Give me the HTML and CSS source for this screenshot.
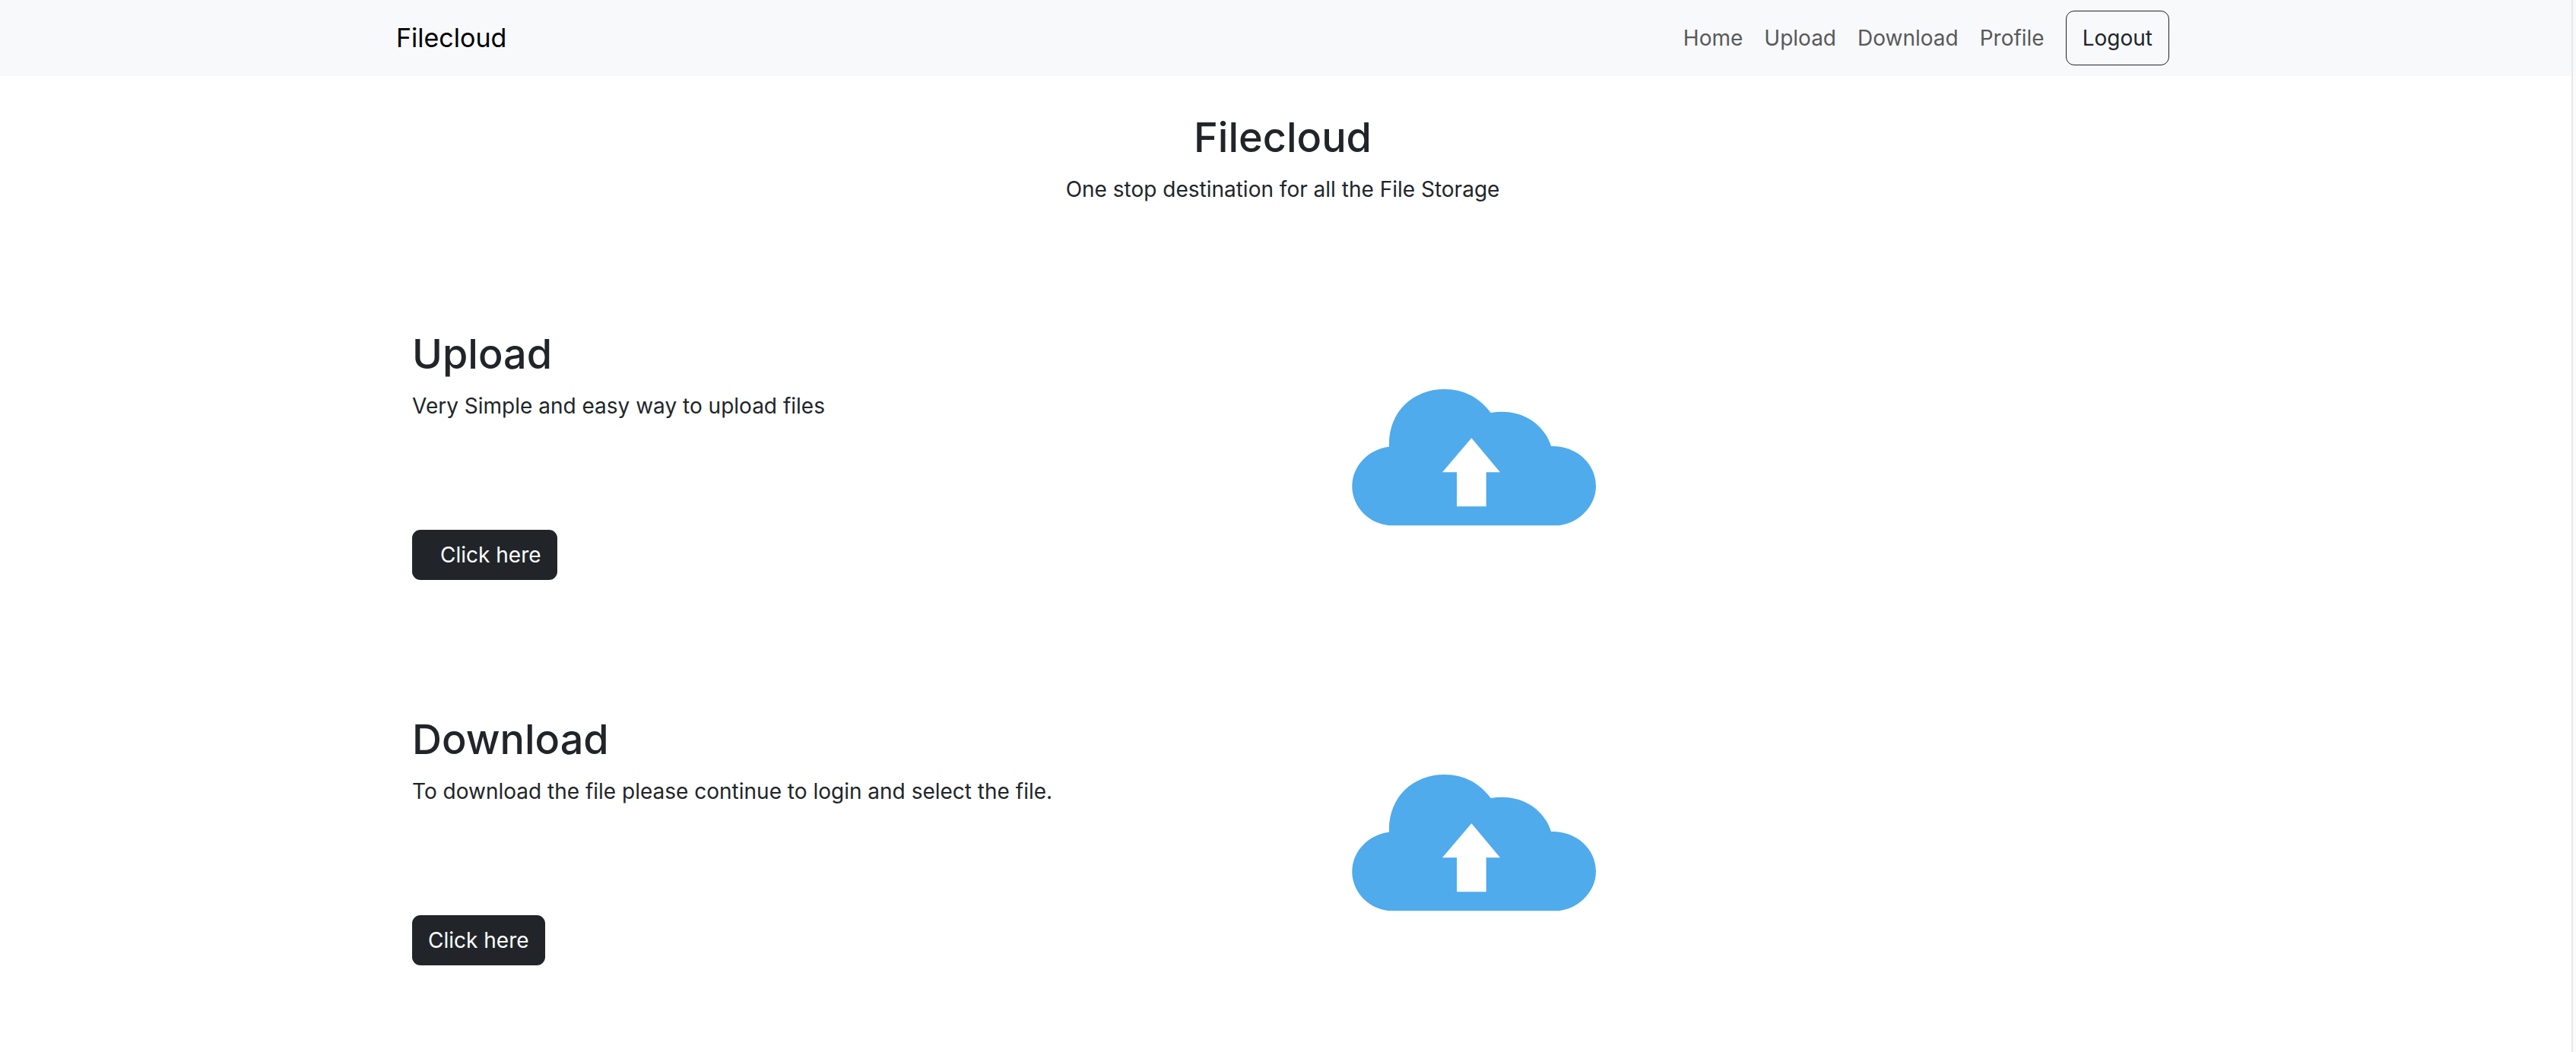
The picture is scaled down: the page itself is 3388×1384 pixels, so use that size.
FILE: index.html
```html
<!DOCTYPE html>
<html lang="en">
<head>
  <meta charset="utf-8">
  <meta name="viewport" content="width=device-width, initial-scale=1">
  <title>Filecloud</title>
  <link rel="stylesheet" href="styles.css">
</head>
<body>
  <div class="page">
    <header class="navbar">
      <div class="container navbar-inner">
        <a class="brand" href="#">Filecloud</a>
        <nav class="nav">
          <a class="nav-link" href="#">Home</a>
          <a class="nav-link" href="#upload">Upload</a>
          <a class="nav-link" href="#download">Download</a>
          <a class="nav-link" href="#">Profile</a>
          <button class="logout" type="button">Logout</button>
        </nav>
      </div>
    </header>
    <main class="main">
      <div class="container">
        <div class="intro">
          <h1 class="title">Filecloud</h1>
          <p class="text">One stop destination for all the File Storage</p>
        </div>
        <section class="feature" id="upload">
          <div class="feature-body">
            <h2 class="title">Upload</h2>
            <p class="text">Very Simple and easy way to upload files</p>
            <button class="btn btn-indent" type="button">Click here</button>
          </div>
          <svg class="cloud" viewBox="-159 -143 1260 996" role="img" aria-label="Cloud upload">
            <path class="cloud-shape" d="M275 635C188 635 115 565 115 480C115 400 180 333 261 324C256 190 352 97 480 97C555 97 618 130 662 190C770 170 870 225 900 322C1000 320 1077 390 1077 480C1077 562 1002 635 915 635Z"/>
            <path class="cloud-arrow" d="M586 290L699 425H644V560H528V425H471Z"/>
          </svg>
        </section>
        <section class="feature" id="download">
          <div class="feature-body">
            <h2 class="title">Download</h2>
            <p class="text">To download the file please continue to login and select the file.</p>
            <button class="btn" type="button">Click here</button>
          </div>
          <svg class="cloud" viewBox="-159 -143 1260 996" role="img" aria-label="Cloud download">
            <path class="cloud-shape" d="M275 635C188 635 115 565 115 480C115 400 180 333 261 324C256 190 352 97 480 97C555 97 618 130 662 190C770 170 870 225 900 322C1000 320 1077 390 1077 480C1077 562 1002 635 915 635Z"/>
            <path class="cloud-arrow" d="M586 290L699 425H644V560H528V425H471Z"/>
          </svg>
        </section>
      </div>
    </main>
  </div>
</body>
</html>
```
FILE: styles.css
```css
* {
  box-sizing: border-box;
}

body {
  margin: 0;
  background: #fafafa;
  color: #212529;
  font-family: Inter, "Liberation Sans", sans-serif;
  font-size: 28px;
  line-height: 42px;
}

.page {
  min-height: 100vh;
  margin-right: 4px;
  border-right: 2px solid #e7e7e7;
  background: #fff;
}

.container {
  width: 100%;
  max-width: 2332px;
  margin: 0 auto;
}

.navbar {
  padding: 14px 8px 14px 0;
  background: #f8f9fb;
}

.navbar-inner,
.nav {
  display: flex;
  align-items: center;
}

.navbar-inner {
  justify-content: space-between;
}

.nav {
  gap: 28px;
}

.brand {
  color: #000;
  font-size: 34px;
  text-decoration: none;
}

.nav-link {
  color: #58595a;
  text-decoration: none;
}

.logout,
.btn {
  border: 2px solid #212529;
  border-radius: 11px;
  font: inherit;
}

.logout {
  padding: 14px 21px;
  border-width: 1px;
  background: transparent;
  color: #212529;
}

.main {
  padding: 47px 8px 47px 0;
}

.title {
  margin: 0 0 14px;
  font-size: 54px;
  font-weight: 500;
  line-height: 67px;
}

.text {
  margin: 0;
}

.intro {
  margin-bottom: 162px;
  text-align: center;
}

.feature {
  display: grid;
  grid-template-columns: 1fr 1fr;
}

.feature + .feature {
  margin-top: 175px;
}

.feature-body {
  padding: 0 21px;
}

.btn {
  margin-top: 142px;
  padding: 10px 19px;
  background: #212529;
  color: #fff;
}

.btn-indent {
  padding-left: 35px;
}

.cloud {
  width: 420px;
  height: 332px;
}

.cloud-shape {
  fill: #4fabeb;
}

.cloud-arrow {
  fill: #fff;
}
```
